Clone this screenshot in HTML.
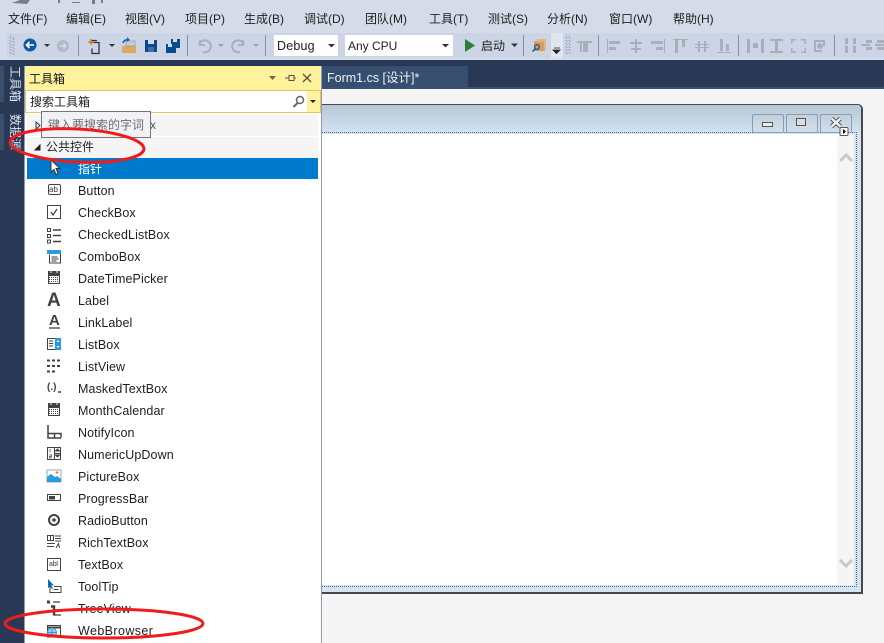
<!DOCTYPE html>
<html><head><meta charset="utf-8">
<style>
html,body{margin:0;padding:0}
body{width:884px;height:643px;position:relative;overflow:hidden;background:#293955;font-family:"Liberation Sans","Noto Sans CJK SC",sans-serif;font-size:12.5px;color:#1e1e1e}
.a{position:absolute}
.t{position:absolute;white-space:nowrap;line-height:16px}
.m{position:absolute;top:11px;white-space:nowrap;line-height:16px;font-size:12px;color:#1e1e1e}
.r{position:absolute;left:78px;white-space:nowrap;line-height:16px;font-size:12.5px;color:#1e1e1e;letter-spacing:.1px}
svg{position:absolute;left:0;top:0;overflow:visible}
</style></head><body>
<div class="a" style="left:0;top:0;width:884px;height:60px;background:#d6dbe9"></div>
<div class="a" style="left:7px;top:33px;width:877px;height:25px;background:#ccd5e5"></div>
<div class="m" style="left:8px">文件(F)</div>
<div class="m" style="left:66px">编辑(E)</div>
<div class="m" style="left:125px">视图(V)</div>
<div class="m" style="left:185px">项目(P)</div>
<div class="m" style="left:244px">生成(B)</div>
<div class="m" style="left:304px">调试(D)</div>
<div class="m" style="left:365px">团队(M)</div>
<div class="m" style="left:429px">工具(T)</div>
<div class="m" style="left:488px">测试(S)</div>
<div class="m" style="left:547px">分析(N)</div>
<div class="m" style="left:609px">窗口(W)</div>
<div class="m" style="left:673px">帮助(H)</div>
<div class="a" style="left:274px;top:35px;width:64px;height:21px;background:#fff"></div>
<div class="a" style="left:345px;top:35px;width:108px;height:21px;background:#fff"></div>
<div class="t" style="left:277px;top:38px;font-size:12.5px;letter-spacing:.2px">Debug</div>
<div class="t" style="left:348px;top:38px;font-size:12px">Any CPU</div>
<div class="t" style="left:481px;top:38px;font-size:12px">启动</div>
<div class="a" style="left:551px;top:33px;width:12px;height:25px;background:#dfe4ef"></div>
<svg width="884" height="643">
<path d="M12 3l8-3h10l-3 4zM58 0h2v3h-2zM72 2h8v1h-8zM92 0h3v4h-3zM101 0h2v3h-2z" fill="#777d88"/>
<g fill="#8792a5"><rect x="10" y="36" width="1" height="18" fill="none" stroke="#8c96a8" stroke-dasharray="1 2" stroke-width="1"/><rect x="13" y="37" width="1" height="18" fill="none" stroke="#8c96a8" stroke-dasharray="1 2" stroke-width="1"/>
<rect x="78" y="35" width="1" height="21"/><rect x="187" y="35" width="1" height="21"/><rect x="265" y="35" width="1" height="21"/><rect x="523" y="35" width="1" height="21"/><rect x="598" y="35" width="1" height="21"/><rect x="738" y="35" width="1" height="21"/><rect x="834" y="35" width="1" height="21"/></g>
<circle cx="30" cy="45" r="6.500" fill="#0e5a9e"/><path d="M34 45H27M29.500 42L26.500 45L29.500 48" stroke="#fff" stroke-width="1.600" fill="none"/>
<path d="M44 44h6l-3 3z" fill="#333"/>
<circle cx="63" cy="46" r="6" fill="#b5b9c1"/><path d="M60 46h6M63.500 43.500L66 46L63.500 48.500" stroke="#d6dbe9" stroke-width="1.400" fill="none"/>
<path d="M90 42.500h9v11h-7v-5M92 42.500l0-2h5" fill="none" stroke="#333" stroke-width="1.300"/><path d="M91 39v6M88 42h6" stroke="#d0882a" stroke-width="1.500"/><path d="M109 44h6l-3 3z" fill="#333"/>
<path d="M122 46h14v7h-14z" fill="#dca95e"/><path d="M126 41h9v5h-9z" fill="#c8cdd6" stroke="#888" stroke-width=".6"/><path d="M123 43a4 4 0 0 1 5-3" fill="none" stroke="#0e6ab0" stroke-width="1.700"/><path d="M127 37l3 3l-3 2z" fill="#0e6ab0"/>
<path d="M145 40h12v12h-12z" fill="#0b4a8c"/><rect x="148" y="40" width="6" height="4" fill="#d6dbe9"/><rect x="148" y="47" width="6" height="5" fill="#d6dbe9" opacity=".25"/>
<path d="M166 44h10v9h-10z" fill="#0b4a8c"/><path d="M171 39h9v9h-4v-4h-5z" fill="#0b4a8c"/><rect x="173" y="39" width="4" height="3" fill="#d6dbe9"/><rect x="168" y="44" width="4" height="3" fill="#d6dbe9"/>
<path d="M200 40v5h5M199 45a6 6 0 1 1 4 7" fill="none" stroke="#aab0bb" stroke-width="2"/><path d="M218 44h6l-3 3z" fill="#9aa0aa"/>
<path d="M243 40v5h-5M244 45a6 6 0 1 0-4 7" fill="none" stroke="#aab0bb" stroke-width="2"/><path d="M253 44h6l-3 3z" fill="#9aa0aa"/>
<path d="M328 44h7l-3.500 3.500z" fill="#333"/><path d="M442 44h7l-3.500 3.500z" fill="#333"/>
<path d="M465 39l10 6.500l-10 6.500z" fill="#2e7d32"/><path d="M511 43.500h7l-3.500 3.500z" fill="#333"/>
<path d="M534 41h4l1 1h6v9h-11z" fill="#d69e58"/><path d="M537 39h9v10h-2v-7h-7z" fill="#e2b67c"/><circle cx="537" cy="47" r="2.300" fill="none" stroke="#0e5a9e" stroke-width="1.300"/><path d="M535 49l-2.500 2.500" stroke="#0e5a9e" stroke-width="1.500"/>
<path d="M554 48h6M553 50h7l-3.500 3.500z" fill="#222" stroke="#222" stroke-width=".8"/>
<rect x="566" y="36" width="1" height="18" fill="none" stroke="#8c96a8" stroke-dasharray="1 2"/><rect x="569" y="36" width="1" height="18" fill="none" stroke="#8c96a8" stroke-dasharray="1 2"/>
<g fill="#a9aeb8">
<path d="M577 41h15v2h-15zM583 43h5v9h-5zM580 43h2v9h-2z" />
<path d="M607 39h1v14h-1zM609 41h11v3h-11zM609 47h7v3h-7z"/>
<path d="M635 39h2v14h-2zM630 42h12v2h-12zM631 48h10v2h-10z"/>
<path d="M664 39h1v14h-1zM651 41h12v3h-12zM656 47h7v3h-7z"/>
<path d="M673 39h15v1h-15zM675 40h3v13h-3zM682 40h3v7h-3z"/>
<path d="M695 44h14v1h-14zM695 47h14v1h-14zM698 41h2v11h-2zM704 41h2v11h-2z"/>
<path d="M717 52h14v1h-14zM720 39h3v12h-3zM726 44h3v7h-3z"/>
<path d="M747 39h3v14h-3zM761 39h3v14h-3zM753 43h5v5h-5z"/>
<path d="M770 39h13v2h-13zM770 51h13v2h-13zM775 41h3v10h-3z"/>
<path d="M791 39h5v1.500h-5zM791 39h1.500v5h-1.500zM801 39h5v1.500h-5zM804.500 39h1.500v5h-1.500zM791 51.500h5v1.500h-5zM791 48h1.500v5h-1.500zM801 51.500h5v1.500h-5zM804.500 48h1.500v5h-1.500z"/>
<path d="M814 40h11v2h-11zM814 42h2v8h-2zM823 42h2v4h-2zM814 50h8v2h-8z"/><circle cx="820" cy="46" r="3"/>
<path d="M845 38h3v6h-3zM845 46h3v7h-3zM853 38h3v6h-3zM853 46h3v7h-3z"/>
<path d="M866 40h6v3h-6zM866 47h6v3h-6zM875 44h9v2h-9zM861 44h9v2h-9zM877 40h7v3h-7zM877 47h7v3h-7z"/>
</g>
</svg>

<!-- left rail -->
<div class="a" style="left:0;top:66px;width:4px;height:36px;background:#3b4f6b"></div>
<div class="a" style="left:0;top:114px;width:4px;height:36px;background:#3b4f6b"></div>
<div class="a" style="left:8px;top:66px;writing-mode:vertical-rl;text-orientation:sideways;line-height:14px;font-size:12px;color:#dbe4f0;white-space:nowrap">工具箱</div>
<div class="a" style="left:8px;top:114px;writing-mode:vertical-rl;text-orientation:sideways;line-height:14px;font-size:12px;color:#dbe4f0;white-space:nowrap">数据源</div>

<!-- document -->
<div class="a" style="left:322px;top:66px;width:146px;height:22px;background:#364e6f"></div>
<div class="t" style="left:327px;top:70px;color:#eef2f8;font-size:12.5px">Form1.cs [设计]*</div>
<div class="a" style="left:322px;top:87px;width:562px;height:2px;background:#3b5275"></div>
<div class="a" style="left:322px;top:89px;width:562px;height:554px;background:#f5f5f5"></div>

<!-- form -->
<div class="a" style="left:322px;top:104px;width:539px;height:487px;background:#d6e4f2;border:solid #45484f;border-width:1px 2px 2px 0;border-top-right-radius:5px;box-sizing:content-box"></div>
<div class="a" style="left:322px;top:105px;width:539px;height:28px;background:linear-gradient(#b7c7d6,#d3e2f1);border-top-right-radius:4px"></div>
<div class="a" style="left:322px;top:132px;width:534px;height:453px;border:1px dotted #5c6470;border-left:none;box-sizing:content-box"></div>
<div class="a" style="left:322px;top:134px;width:515px;height:451px;background:#fff"></div>
<div class="a" style="left:837px;top:134px;width:17px;height:451px;background:#f5f5f5"></div>
<div class="a" style="left:752px;top:114px;width:30px;height:17px;border:1px solid #8e9cb0;border-radius:2px;background:linear-gradient(#c2d0de,#d2e0ee)"></div>
<div class="a" style="left:786px;top:114px;width:30px;height:17px;border:1px solid #8e9cb0;border-radius:2px;background:linear-gradient(#c2d0de,#d2e0ee)"></div>
<div class="a" style="left:820px;top:114px;width:30px;height:17px;border:1px solid #8e9cb0;border-radius:2px;background:linear-gradient(#c2d0de,#d2e0ee)"></div>
<div class="a" style="left:762px;top:122px;width:9px;height:3px;border:1px solid #555;background:#eee"></div>
<div class="a" style="left:796px;top:118px;width:8px;height:6px;border:1px solid #555;background:#ddd;box-sizing:content-box"></div>
<svg width="884" height="643">
<path d="M831.500 118.500l9 8M840.500 118.500l-9 8" stroke="#555" stroke-width="4.500"/><path d="M831.500 118.500l9 8M840.500 118.500l-9 8" stroke="#f0f0f0" stroke-width="2.500"/>
<rect x="840" y="127.500" width="8" height="8" rx="1" fill="#fff" stroke="#555"/><path d="M843 129l3 2.500l-3 2.500z" fill="#000"/>
<path d="M840 161l6-6l6 6" fill="none" stroke="#c8c8c8" stroke-width="3"/>
<path d="M840 560l6 6l6-6" fill="none" stroke="#c8c8c8" stroke-width="3"/>
</svg>

<!-- toolbox -->
<div class="a" style="left:24px;top:66px;width:298px;height:577px;background:#fff;border-left:1px solid #8e9bc0;box-sizing:border-box"></div>
<div class="a" style="left:25px;top:66px;width:296px;height:24px;background:#fff29d"></div>
<div class="a" style="left:25px;top:90px;width:296px;height:23px;background:#fff;border:1px solid #e5c365;box-sizing:border-box"></div>
<div class="a" style="left:307px;top:91px;width:13px;height:21px;background:#fff29d"></div>
<div class="a" style="left:321px;top:66px;width:1px;height:577px;background:#8e9bc0"></div>
<div class="t" style="left:29px;top:71px;font-size:12px;color:#111">工具箱</div>
<div class="t" style="left:30px;top:94px;font-size:12px;color:#1e1e1e">搜索工具箱</div>
<div class="a" style="left:27px;top:114px;width:291px;height:22px;background:#f5f5f5"></div>
<div class="a" style="left:27px;top:137px;width:291px;height:21px;background:#f5f5f5"></div>
<div class="t" style="left:46px;top:139px;font-size:12px;color:#1e1e1e">公共控件</div>
<div class="t" style="left:150px;top:117px;font-size:12px;color:#555">x</div>
<div class="a" style="left:27px;top:158px;width:291px;height:21px;background:#007acc"></div>
<div class="t" style="left:78px;top:161px;font-size:12px;color:#fff">指针</div>
<div class="a" style="left:41px;top:111px;width:110px;height:27px;background:#f1f2f7;border:1px solid #767676;box-sizing:border-box"></div>
<div class="t" style="left:48px;top:117px;font-size:12px;color:#6d6d6d">键入要搜索的字词</div>

<div class="r" style="top:183px">Button</div>
<div class="r" style="top:205px">CheckBox</div>
<div class="r" style="top:227px">CheckedListBox</div>
<div class="r" style="top:249px">ComboBox</div>
<div class="r" style="top:271px">DateTimePicker</div>
<div class="r" style="top:293px">Label</div>
<div class="r" style="top:315px">LinkLabel</div>
<div class="r" style="top:337px">ListBox</div>
<div class="r" style="top:359px">ListView</div>
<div class="r" style="top:381px">MaskedTextBox</div>
<div class="r" style="top:403px">MonthCalendar</div>
<div class="r" style="top:425px">NotifyIcon</div>
<div class="r" style="top:447px">NumericUpDown</div>
<div class="r" style="top:469px">PictureBox</div>
<div class="r" style="top:491px">ProgressBar</div>
<div class="r" style="top:513px">RadioButton</div>
<div class="r" style="top:535px">RichTextBox</div>
<div class="r" style="top:557px">TextBox</div>
<div class="r" style="top:579px">ToolTip</div>
<div class="r" style="top:601px">TreeView</div>
<div class="r" style="top:623px;letter-spacing:.4px">WebBrowser</div>

<div class="t" style="left:49px;top:184px;font-size:8px;line-height:11px;color:#333">ab</div>
<div class="a" style="left:48px;top:184px;width:11px;height:9px;border:1px solid #424242;border-radius:2px"></div>
<div class="t" style="left:49px;top:559px;font-size:7px;line-height:11px;color:#333;letter-spacing:-.2px">abl</div>
<div class="t" style="left:47px;top:291px;font-size:19px;line-height:20px;font-weight:bold;color:#424242">A</div>
<div class="t" style="left:49px;top:312px;font-size:15px;line-height:18px;font-weight:bold;color:#424242">A</div>
<div class="t" style="left:47px;top:381px;font-size:10px;line-height:14px;font-weight:bold;color:#424242">(.)</div>

<svg width="884" height="643">
<g fill="none" stroke="#424242" stroke-width="1">
<path d="M269 76h7l-3.500 4z" fill="#6d6a4c" stroke="none"/>
<path d="M285 78h4M289 75.500h5v5h-5zM289 75v6M294 78h2" stroke="#55533b"/>
<path d="M303 74l8 8M311 74l-8 8" stroke="#55533b" stroke-width="1.300"/>
<circle cx="300" cy="100" r="3.500" stroke="#666" stroke-width="1.500"/><path d="M297.500 103l-4 4" stroke="#666" stroke-width="2"/>
<path d="M310 100h6l-3 3z" fill="#222" stroke="none"/>
<path d="M36 122v7l4-3.500z" stroke="#333"/>
<path d="M35 150l5-5v5z" fill="#222" stroke="#222"/>
<path d="M51 160v12l3-2.500l2 5l2-1l-2-5h4z" fill="#fff" stroke="#333"/>
<rect x="47.500" y="205.500" width="13" height="13"/><path d="M51 212l2 3l4-6" stroke-width="1.300"/>
<g><rect x="47.500" y="228.500" width="3" height="3"/><rect x="47.500" y="234.500" width="3" height="3"/><rect x="47.500" y="240" width="3" height="3"/></g>
<path d="M53 230h8M53 235.500h8M53 241.500h8" stroke-width="1.600"/>
<rect x="47" y="250" width="14" height="4" fill="#2a9be0" stroke="none"/><path d="M49.500 254.500v8.500h11v-9M51.500 257h6M51.500 259h7M51.500 261h5"/>
<rect x="48" y="271" width="12" height="13" fill="#424242" stroke="none"/><rect x="49" y="276" width="10" height="7" fill="#fff" stroke="none"/><path d="M49 277.500h10M49 279.500h10M49 281.500h10" stroke="#424242" stroke-dasharray="1 1"/><path d="M51 271v2M57 271v2" stroke="#fff"/>
<rect x="48" y="403" width="12" height="13" fill="#424242" stroke="none"/><rect x="49" y="408" width="10" height="7" fill="#fff" stroke="none"/><path d="M49 409.500h10M49 411.500h10M49 413.500h10" stroke="#424242" stroke-dasharray="1 1"/><path d="M51 403v2M57 403v2" stroke="#fff"/>
<path d="M49 328h11" stroke-width="1.300"/>
<rect x="47.500" y="338.500" width="13" height="11"/><rect x="55" y="338" width="6" height="12" fill="#2a9be0" stroke="none"/><path d="M56.500 342l1.500-2l1.500 2zM56.500 346h3l-1.500 2z" fill="#fff" stroke="none"/><path d="M49 341h4M49 343.500h4M49 346h4"/>
<path d="M47 360.500h3M52 360.500h3M57 360.500h3M47 366h3M52 366h3M57 366h3M47 371.500h3M52 371.500h3" stroke-width="2"/>
<path d="M58 392h3" stroke-width="1.500"/>
<path d="M48 425v13h13M48.500 433.500h12.500v4M54.500 433.500v4" stroke-width="1.500"/>
<rect x="47.500" y="447.500" width="13" height="12"/><path d="M54.500 447.500v12M55 453.500h5.500" /><path d="M50 449v3M49.500 455h2v1.500h-2v1.500h2" stroke-width=".8"/>
<path d="M55.500 451l2-2l2 2zM55.500 455h4l-2 2z" fill="#424242"/>
<rect x="47" y="470" width="14" height="12" fill="#fff" stroke="#9aa"/><path d="M47 482v-5l4-3l4 3l2-1l4 3v3z" fill="#2a9be0" stroke="none"/><path d="M57 471v3M55.500 472.500h3" stroke="#d0882a"/>
<rect x="47.500" y="494.500" width="13" height="6"/><rect x="49" y="496" width="6" height="3.500" fill="#424242" stroke="none"/>
<circle cx="54" cy="520" r="5" stroke-width="2"/><circle cx="54" cy="520" r="1.800" fill="#424242" stroke="none"/>
<rect x="47.500" y="535.500" width="6" height="5"/><path d="M50.500 535.500v5M55 536h6M55 538.500h6M55 541h6M47 543.500h8M47 546.500h7" />
<path d="M56 548l2.500-4.500l1 4.500" stroke-width="1"/>
<rect x="47.500" y="558.500" width="13" height="12"/>
<path d="M48 579v9l2-1.500l2 2.500l1-1-2-2.500h3z" fill="#0e6ab0" stroke="none"/><path d="M50 586.500v6h11v-6h-7M53.500 589.500h5"/>
<path d="M47 602h3" stroke-width="3"/><path d="M53 602h7M53 610h8M53 615h8" stroke-width="1.300"/><path d="M51 606.500h3v8" stroke-width="2.500"/>
<rect x="47.500" y="625.500" width="13" height="11.500"/><path d="M47.500 627.500h13" stroke-width="2"/>
<circle cx="52" cy="632.500" r="4.500" fill="#9fd0ef" stroke="#2a9be0"/><path d="M47.500 632.500h9M52 628v9" stroke="#2a9be0"/>
</g>
<ellipse cx="77" cy="145.500" rx="67" ry="16.500" fill="none" stroke="#ee1c1c" stroke-width="3" transform="rotate(3 77 145.500)"/>
<ellipse cx="104" cy="623.500" rx="99" ry="14.500" fill="none" stroke="#ee1c1c" stroke-width="3"/>
</svg>
</body></html>
